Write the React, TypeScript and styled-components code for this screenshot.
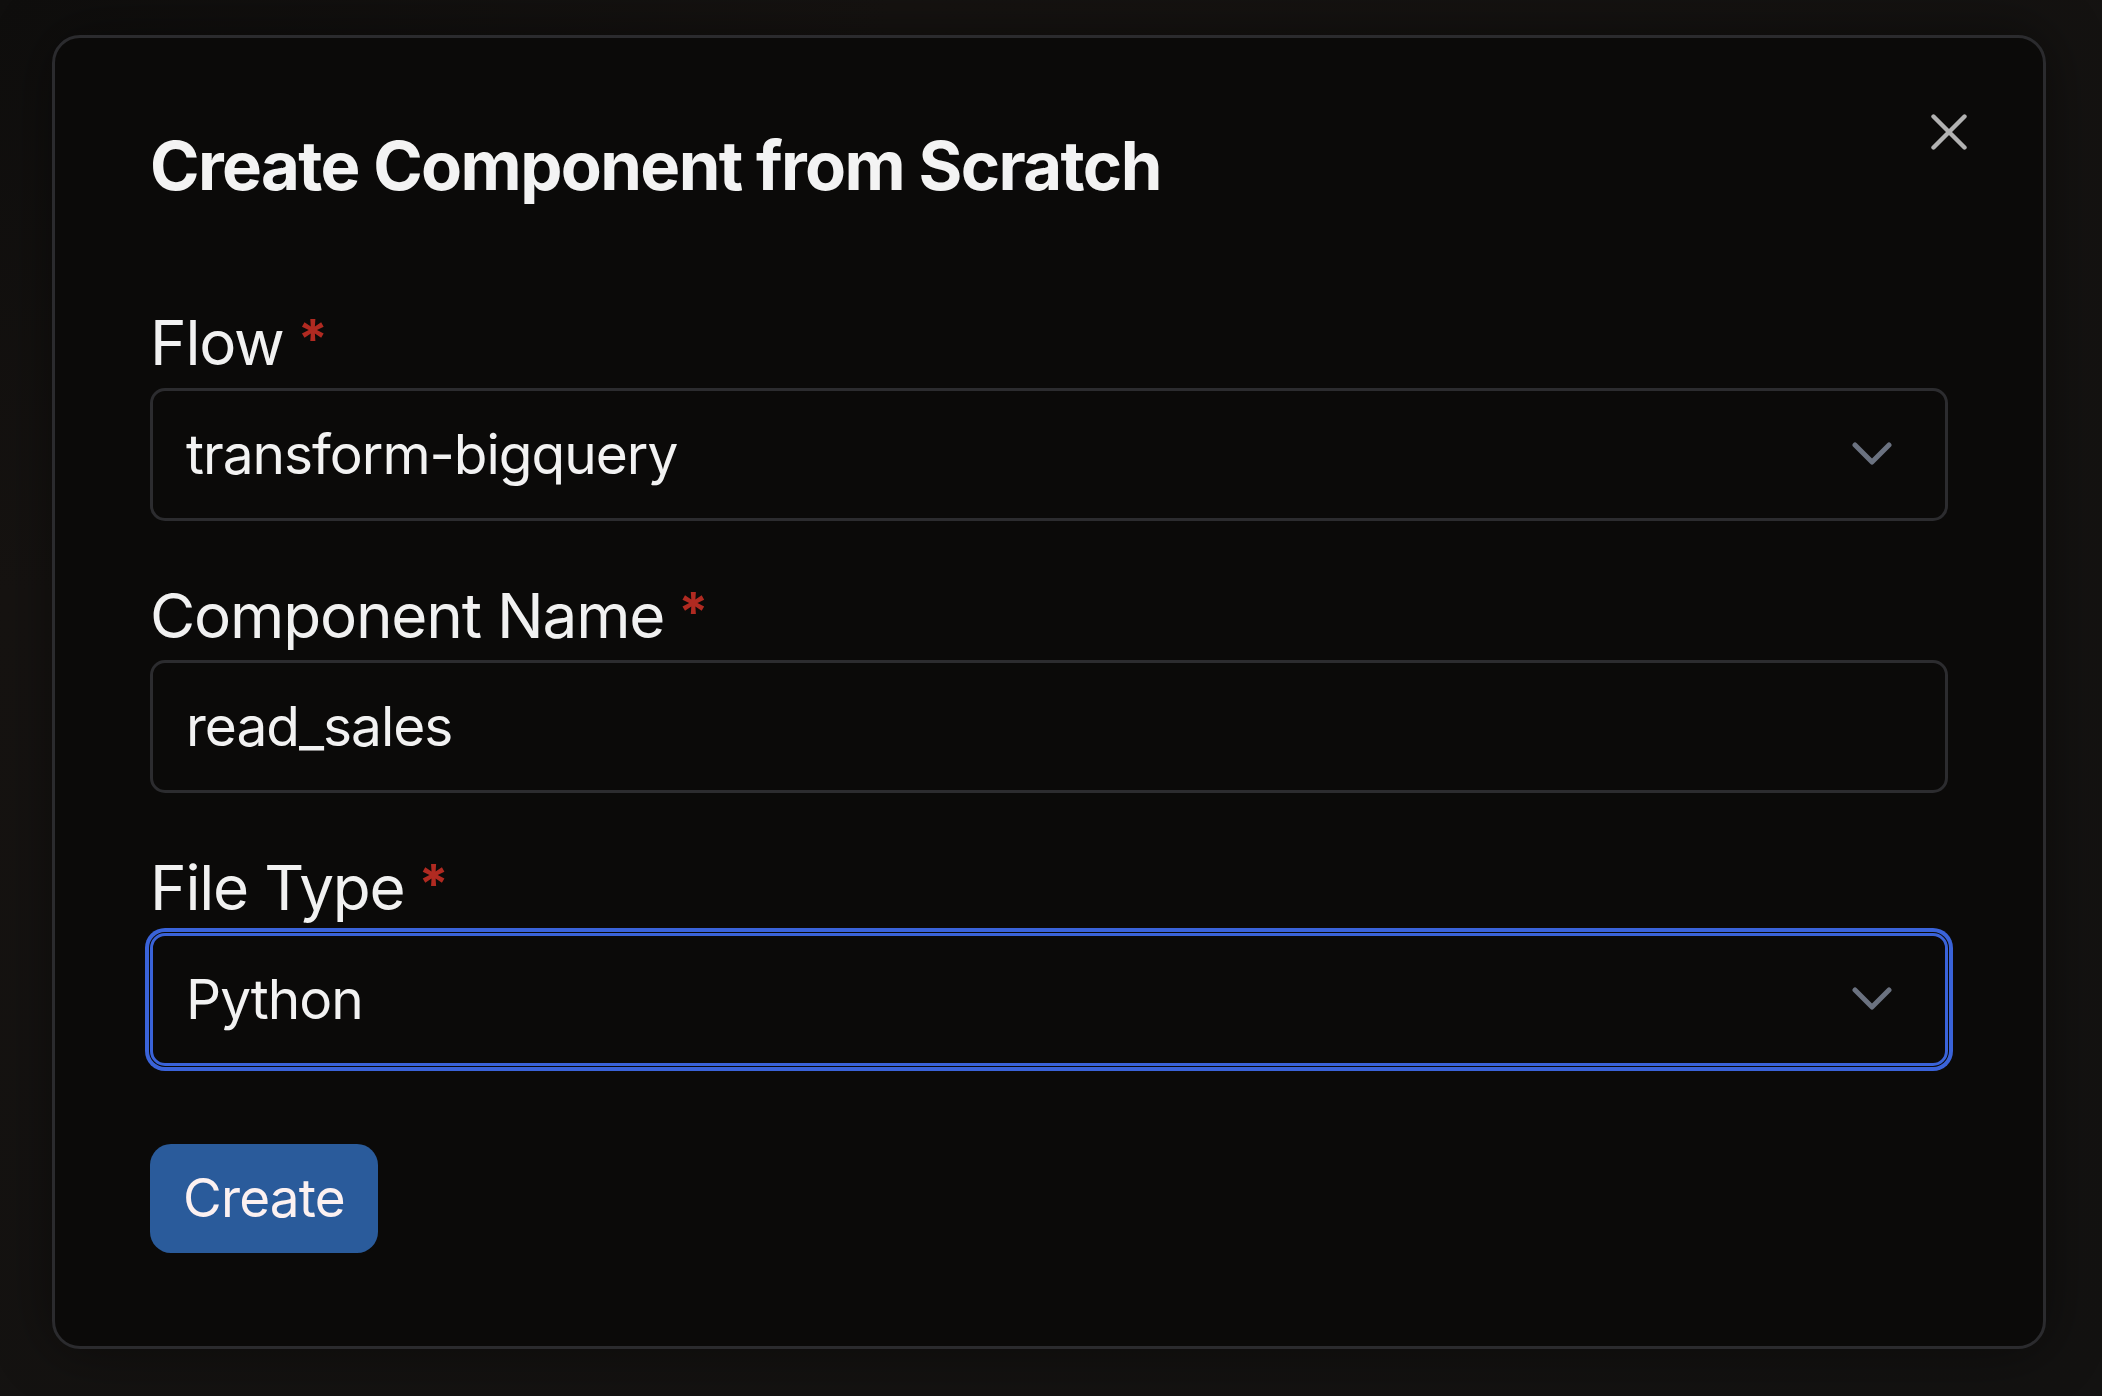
import React from 'react'
import styled, { createGlobalStyle } from 'styled-components'

const GlobalStyle = createGlobalStyle`
  html, body {
    margin: 0;
    padding: 0;
    background: #141210;
  }
  body {
    font-family: Inter, "Noto Sans", "Liberation Sans", sans-serif;
    -webkit-font-smoothing: antialiased;
  }
`

const Page = styled.div`
  width: 2102px;
  height: 1396px;
  box-sizing: border-box;
  padding: 35px 56px 47px 52px;
  background: radial-gradient(ellipse at 0% 0%, #0f0e0d 0%, #161311 30%, #131211 100%);
`

const Dialog = styled.div`
  position: relative;
  box-sizing: border-box;
  height: 100%;
  background: #0b0a09;
  border: 3px solid #2b2b2e;
  border-radius: 28px;
  padding: 88px 95px 0 95px;
  display: flex;
  flex-direction: column;
  box-shadow: 0 0 60px rgba(0, 0, 0, 0.45);
`

const Title = styled.h2`
  margin: 0 0 100px 0;
  font-size: 67px;
  line-height: 1.2;
  font-weight: 700;
  letter-spacing: -1.6px;
  color: #f3f3f3;
`

const CloseButton = styled.button`
  position: absolute;
  top: 73px;
  right: 73px;
  width: 42px;
  height: 42px;
  padding: 3px;
  border: 0;
  background: transparent;
  color: #b2b2b2;
  display: flex;
  align-items: center;
  justify-content: center;
  cursor: pointer;
`

const Form = styled.div`
  display: flex;
  flex-direction: column;
  gap: 58px;
`

const Field = styled.div`
  display: flex;
  flex-direction: column;
`

const Label = styled.label`
  display: flex;
  align-items: flex-start;
  font-size: 62px;
  line-height: 1.2;
  font-weight: 400;
  letter-spacing: -1.2px;
  color: #f1f1f1;
  margin-bottom: 7px;
`

const Required = styled.span`
  color: #b02a21;
  font-size: 54px;
  line-height: 1;
  font-weight: 700;
  margin-left: 14px;
  margin-top: 6px;
`

const Box = styled.div<{ $focused?: boolean }>`
  box-sizing: border-box;
  height: 133px;
  display: flex;
  align-items: center;
  justify-content: space-between;
  padding: 0 53px 0 33px;
  border: 3px solid ${(p) => (p.$focused ? '#3a63d9' : '#2c2c2f')};
  border-radius: 15px;
  background: #0b0a09;
  box-shadow: ${(p) => (p.$focused ? '0 0 0 1px #0b0a09, 0 0 0 5px #3a63d9' : 'none')};
`

const Value = styled.span`
  font-size: 55px;
  line-height: 1;
  color: #f2f2f2;
  letter-spacing: -1px;
`

const Actions = styled.div`
  margin-top: 78px;
  display: flex;
`

const PrimaryButton = styled.button`
  height: 109px;
  padding: 0 33px;
  border: 0;
  border-radius: 21px;
  background: #2a5b9b;
  color: #fcf1f1;
  font-family: inherit;
  font-size: 53px;
  font-weight: 400;
  letter-spacing: -0.8px;
  cursor: pointer;
`

const Chevron = () => (
  <svg width="40" height="24" viewBox="0 0 40 24" fill="none">
    <path d="M3 3L20 20L37 3" stroke="#6b7280" strokeWidth="5" strokeLinecap="round" strokeLinejoin="round" />
  </svg>
)

const CloseIcon = () => (
  <svg width="36" height="36" viewBox="0 0 36 36" fill="none">
    <path d="M2.5 2.5L33.5 33.5M33.5 2.5L2.5 33.5" stroke="currentColor" strokeWidth="4.4" strokeLinecap="round" />
  </svg>
)

const App = () => {
  return (
    <>
      <GlobalStyle />
      <Page>
        <Dialog>
          <CloseButton aria-label="Close">
            <CloseIcon />
          </CloseButton>
          <Title>Create Component from Scratch</Title>
          <Form>
            <Field>
              <Label>
                Flow<Required>*</Required>
              </Label>
              <Box>
                <Value>transform-bigquery</Value>
                <Chevron />
              </Box>
            </Field>
            <Field>
              <Label>
                Component Name<Required>*</Required>
              </Label>
              <Box>
                <Value>read_sales</Value>
              </Box>
            </Field>
            <Field>
              <Label>
                File Type<Required>*</Required>
              </Label>
              <Box $focused>
                <Value>Python</Value>
                <Chevron />
              </Box>
            </Field>
          </Form>
          <Actions>
            <PrimaryButton>Create</PrimaryButton>
          </Actions>
        </Dialog>
      </Page>
    </>
  )
}

export default App
